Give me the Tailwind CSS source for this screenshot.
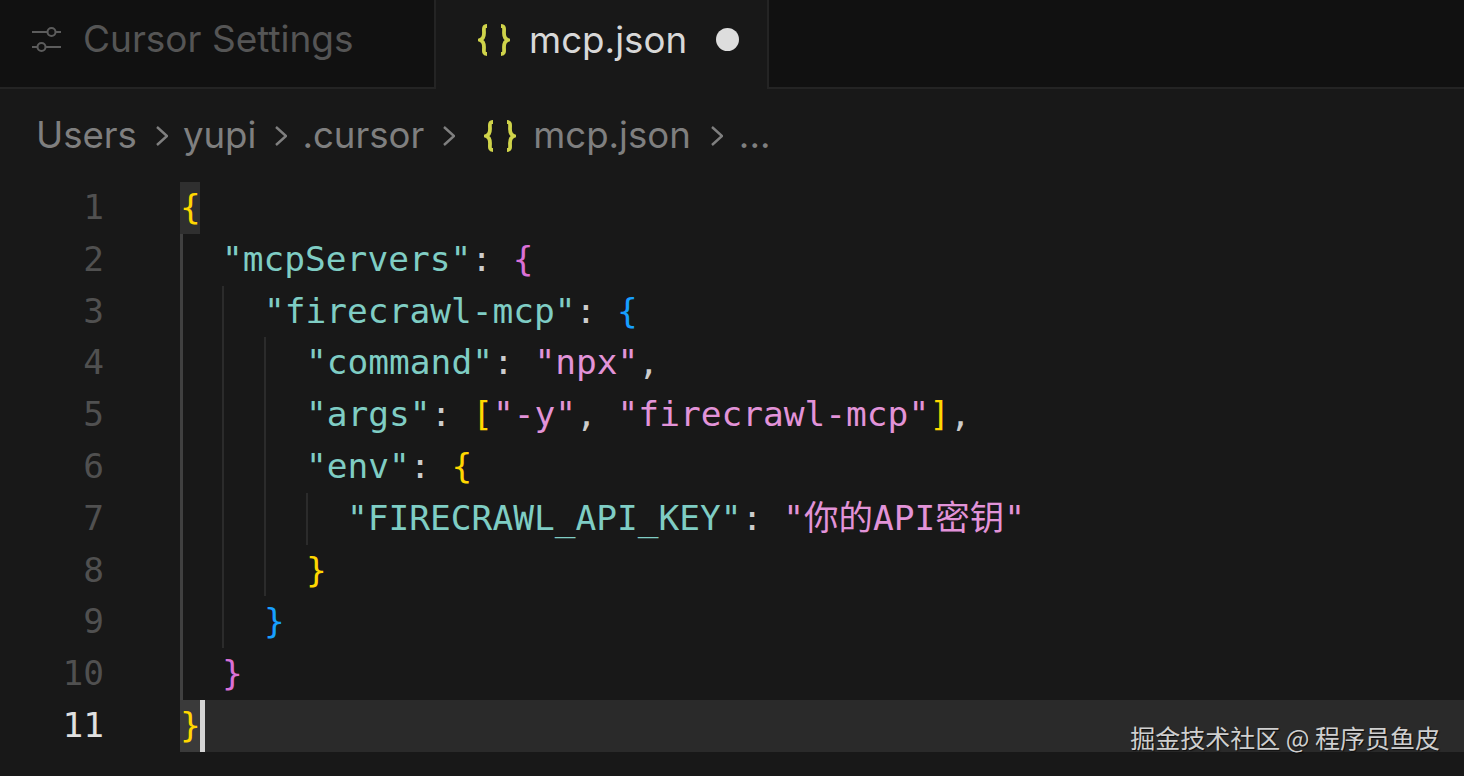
<!DOCTYPE html>
<html lang="zh">
<head>
    <meta charset="UTF-8">
    <title>mcp.json</title>
    <script src="https://cdn.jsdelivr.net/npm/@tailwindcss/browser@4"></script>
</head>
<body class="bg-[#181818] overflow-hidden">
<div class="w-[1464px] h-[776px] flex flex-col font-['Inter','Noto_Sans_CJK_SC',sans-serif]">

    <!-- Tabs -->
    <div class="flex h-[89px] flex-none">
        <div class="w-[436px] flex items-center bg-[#111111] border-b-2 border-r-2 border-[#242424] pl-[31px] pb-[10px]">
            <svg class="w-[30px] h-[30px] flex-none" viewBox="0 0 30 30" fill="none" stroke="#5c5c5c" stroke-width="2">
                <path d="M1 8h15M25 8h5M1 23h5M15 23h15"/>
                <circle cx="20.5" cy="8" r="4"/>
                <circle cx="10.5" cy="23" r="4"/>
            </svg>
            <span class="ml-[22px] text-[37px] text-[#555555]">Cursor Settings</span>
        </div>
        <div class="w-[333px] flex items-center border-r-2 border-[#242424] pl-[42px] pb-[10px]">
            <svg class="w-[32px] h-[32px] flex-none" viewBox="0 0 32 32" fill="none" stroke="#cfd34a" stroke-width="3.8">
                <path d="M9 2C5 2 6 5 6 9c0 4-1 6-4 7 3 1 4 3 4 7 0 4-1 7 3 7"/>
                <path d="M23 2c4 0 3 3 3 7 0 4 1 6 4 7-3 1-4 3-4 7 0 4 1 7-3 7"/>
            </svg>
            <span class="ml-[19px] text-[36.7px] text-[#d8d8d8]">mcp.json</span>
            <span class="ml-[29px] w-[23px] h-[23px] rounded-full bg-[#dddddd] flex-none"></span>
        </div>
        <div class="flex-1 bg-[#111111] border-b-2 border-[#242424]"></div>
    </div>

    <!-- Breadcrumb -->
    <div class="h-[93px] flex-none flex items-center pl-[36px] text-[36.6px] text-[#7f7f7f]">
        <span>Users</span>
        <svg class="w-[12px] h-[22px] ml-[19px] mr-[15px] flex-none" viewBox="0 0 12 22" fill="none" stroke="#7f7f7f" stroke-width="2.4"><path d="M1 2l10 9-10 9"/></svg>
        <span>yupi</span>
        <svg class="w-[12px] h-[22px] ml-[19px] mr-[15px] flex-none" viewBox="0 0 12 22" fill="none" stroke="#7f7f7f" stroke-width="2.4"><path d="M1 2l10 9-10 9"/></svg>
        <span>.cursor</span>
        <svg class="w-[12px] h-[22px] ml-[19px] mr-[15px] flex-none" viewBox="0 0 12 22" fill="none" stroke="#7f7f7f" stroke-width="2.4"><path d="M1 2l10 9-10 9"/></svg>
        <svg class="w-[32px] h-[32px] ml-[14px] flex-none" viewBox="0 0 32 32" fill="none" stroke="#cfd34a" stroke-width="3.8">
            <path d="M9 2C5 2 6 5 6 9c0 4-1 6-4 7 3 1 4 3 4 7 0 4-1 7 3 7"/>
            <path d="M23 2c4 0 3 3 3 7 0 4 1 6 4 7-3 1-4 3-4 7 0 4 1 7-3 7"/>
        </svg>
        <span class="ml-[17px]">mcp.json</span>
        <svg class="w-[12px] h-[22px] ml-[20px] mr-[16px] flex-none" viewBox="0 0 12 22" fill="none" stroke="#7f7f7f" stroke-width="2.4"><path d="M1 2l10 9-10 9"/></svg>
        <span>...</span>
    </div>

    <!-- Editor -->
    <div class="flex flex-col font-['DejaVu_Sans_Mono','Noto_Sans_CJK_SC',monospace] text-[34.5px] whitespace-pre text-[#cccccc]">

        <div class="flex h-[51.8px] items-center">
            <span class="w-[104px] text-right text-[#505050]">1</span>
            <span class="ml-[76px] w-[20px] self-stretch flex items-center bg-[#2f2f2f] text-[#ffd700]">{</span>
        </div>

        <div class="flex h-[51.8px] items-center">
            <span class="w-[104px] text-right text-[#505050]">2</span>
            <span class="ml-[76px] w-[42px] self-stretch flex-none border-l-[3px] border-[#404040]"></span>
            <span class="text-[#7fcdc4]">"mcpServers"</span><span>: </span><span class="text-[#da70d6]">{</span>
        </div>

        <div class="flex h-[51.8px] items-center">
            <span class="w-[104px] text-right text-[#505050]">3</span>
            <span class="ml-[76px] w-[42px] self-stretch flex-none border-l-[3px] border-[#404040]"></span>
            <span class="w-[42px] self-stretch flex-none border-l-2 border-[#2b2b2b]"></span>
            <span class="text-[#7fcdc4]">"firecrawl-mcp"</span><span>: </span><span class="text-[#179fff]">{</span>
        </div>

        <div class="flex h-[51.8px] items-center">
            <span class="w-[104px] text-right text-[#505050]">4</span>
            <span class="ml-[76px] w-[42px] self-stretch flex-none border-l-[3px] border-[#404040]"></span>
            <span class="w-[42px] self-stretch flex-none border-l-2 border-[#2b2b2b]"></span>
            <span class="w-[42px] self-stretch flex-none border-l-2 border-[#2b2b2b]"></span>
            <span class="text-[#7fcdc4]">"command"</span><span>: </span><span class="text-[#e293d8]">"npx"</span><span>,</span>
        </div>

        <div class="flex h-[51.8px] items-center">
            <span class="w-[104px] text-right text-[#505050]">5</span>
            <span class="ml-[76px] w-[42px] self-stretch flex-none border-l-[3px] border-[#404040]"></span>
            <span class="w-[42px] self-stretch flex-none border-l-2 border-[#2b2b2b]"></span>
            <span class="w-[42px] self-stretch flex-none border-l-2 border-[#2b2b2b]"></span>
            <span class="text-[#7fcdc4]">"args"</span><span>: </span><span class="text-[#ffd700]">[</span><span class="text-[#e293d8]">"-y"</span><span>, </span><span class="text-[#e293d8]">"firecrawl-mcp"</span><span class="text-[#ffd700]">]</span><span>,</span>
        </div>

        <div class="flex h-[51.8px] items-center">
            <span class="w-[104px] text-right text-[#505050]">6</span>
            <span class="ml-[76px] w-[42px] self-stretch flex-none border-l-[3px] border-[#404040]"></span>
            <span class="w-[42px] self-stretch flex-none border-l-2 border-[#2b2b2b]"></span>
            <span class="w-[42px] self-stretch flex-none border-l-2 border-[#2b2b2b]"></span>
            <span class="text-[#7fcdc4]">"env"</span><span>: </span><span class="text-[#ffd700]">{</span>
        </div>

        <div class="flex h-[51.8px] items-center">
            <span class="w-[104px] text-right text-[#505050]">7</span>
            <span class="ml-[76px] w-[42px] self-stretch flex-none border-l-[3px] border-[#404040]"></span>
            <span class="w-[42px] self-stretch flex-none border-l-2 border-[#2b2b2b]"></span>
            <span class="w-[42px] self-stretch flex-none border-l-2 border-[#2b2b2b]"></span>
            <span class="w-[41px] self-stretch flex-none border-l-2 border-[#2b2b2b]"></span>
            <span class="text-[#7fcdc4]">"FIRECRAWL_API_KEY"</span><span>: </span><span class="text-[#e293d8]">"你的API密钥"</span>
        </div>

        <div class="flex h-[51.8px] items-center">
            <span class="w-[104px] text-right text-[#505050]">8</span>
            <span class="ml-[76px] w-[42px] self-stretch flex-none border-l-[3px] border-[#404040]"></span>
            <span class="w-[42px] self-stretch flex-none border-l-2 border-[#2b2b2b]"></span>
            <span class="w-[42px] self-stretch flex-none border-l-2 border-[#2b2b2b]"></span>
            <span class="text-[#ffd700]">}</span>
        </div>

        <div class="flex h-[51.8px] items-center">
            <span class="w-[104px] text-right text-[#505050]">9</span>
            <span class="ml-[76px] w-[42px] self-stretch flex-none border-l-[3px] border-[#404040]"></span>
            <span class="w-[42px] self-stretch flex-none border-l-2 border-[#2b2b2b]"></span>
            <span class="text-[#179fff]">}</span>
        </div>

        <div class="flex h-[51.8px] items-center">
            <span class="w-[104px] text-right text-[#505050]">10</span>
            <span class="ml-[76px] w-[42px] self-stretch flex-none border-l-[3px] border-[#404040]"></span>
            <span class="text-[#da70d6]">}</span>
        </div>

        <!-- Current line, with the watermark sitting on it -->
        <div class="flex h-[52px] items-center">
            <span class="w-[104px] text-right text-[#e0e0e0]">11</span>
            <div class="ml-[76px] flex-1 self-stretch flex items-center bg-[#2a2a2a]">
                <span class="w-[20px] self-stretch flex items-center bg-[#3a3a3a] text-[#ffd700]">}</span>
                <span class="w-[5px] self-stretch bg-[#d4d4d4]"></span>
                <span class="ml-auto mr-[24px] self-end font-['Noto_Sans_CJK_SC',sans-serif] text-[25px] leading-[30px] mb-0 text-[#cfcfcf] [text-shadow:1px_1px_1px_rgba(0,0,0,0.7)]">掘金技术社区 @ 程序员鱼皮</span>
            </div>
        </div>
    </div>
</div>
</body>
</html>
